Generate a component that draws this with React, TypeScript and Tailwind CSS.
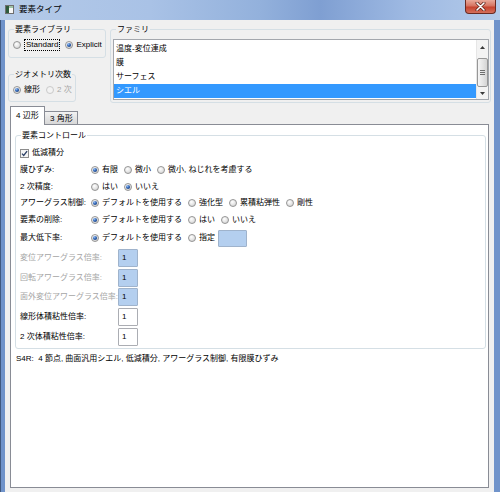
import React from "react";

type RP = { on?: boolean; dis?: boolean };

function Radio({ on, dis }: RP) {
  return (
    <svg width="8" height="8" viewBox="0 0 8 8" className="shrink-0 block">
      <defs>
        <radialGradient id="rgOff" cx="0.4" cy="0.35" r="0.7">
          <stop offset="0" stopColor="#ffffff" />
          <stop offset="1" stopColor="#d2d2d2" />
        </radialGradient>
        <radialGradient id="rgOn" cx="0.35" cy="0.3" r="0.75">
          <stop offset="0" stopColor="#9cc2f2" />
          <stop offset="0.5" stopColor="#3a6fbf" />
          <stop offset="1" stopColor="#1a3f7c" />
        </radialGradient>
      </defs>
      <circle
        cx="4"
        cy="4"
        r="3.5"
        fill={dis ? "#f3f3f3" : "url(#rgOff)"}
        stroke={dis ? "#c4c4c4" : "#8c8c8c"}
        strokeWidth="0.9"
      />
      {on && <circle cx="4" cy="4" r="2.1" fill={dis ? "#b5b5b5" : "url(#rgOn)"} />}
    </svg>
  );
}

function Opt({ on, dis, children }: RP & { children: React.ReactNode }) {
  return (
    <span className="flex items-center">
      <Radio on={on} dis={dis} />
      <span className={dis ? "ml-[3px] text-[#a6a6a6]" : "ml-[3px]"}>{children}</span>
    </span>
  );
}

function Group({
  label,
  className,
  bg,
  children,
}: {
  label: string;
  className: string;
  bg: string;
  children?: React.ReactNode;
}) {
  return (
    <div className={`border border-[#d5dfe5] rounded-[3px] flex flex-col ${className}`}>
      <span className={`-mt-[6px] ml-[5px] px-[1px] self-start leading-[11px] ${bg}`}>{label}</span>
      {children}
    </div>
  );
}

function Row({
  label,
  h,
  lw,
  dis,
  children,
}: {
  label: string;
  h: string;
  lw: string;
  dis?: boolean;
  children: React.ReactNode;
}) {
  return (
    <div className={`flex items-center pl-[4px] ${h}`}>
      <span className={`${lw} shrink-0 whitespace-nowrap ${dis ? "text-[#a6a6a6]" : ""}`}>{label}</span>
      <div className="flex items-center gap-[6px]">{children}</div>
    </div>
  );
}

function Field({ blue, value }: { blue?: boolean; value: string }) {
  return (
    <div
      className={`w-[20px] h-[18px] border rounded-[1px] flex items-center pl-[3px] ${
        blue ? "bg-[#b4cfef] border-[#9fb3cc]" : "bg-white border-[#abadb3]"
      }`}
    >
      {value}
    </div>
  );
}

function Checkbox() {
  return (
    <svg width="9" height="9" viewBox="0 0 9 9" className="shrink-0 block">
      <rect x="0.5" y="0.5" width="8" height="8" fill="#f4f4f4" stroke="#8c8c8c" />
      <path d="M2 4.6 L3.7 6.4 L7.1 2.1" stroke="#2b3f66" strokeWidth="1.3" fill="none" />
    </svg>
  );
}

export default function App() {
  const items = ["温度-変位連成", "膜", "サーフェス", "シエル"];
  return (
    <div className="w-[500px] h-[492px] flex flex-col overflow-hidden text-[8px] text-black font-['Liberation_Sans','Noto_Sans_CJK_JP',sans-serif] bg-[#7093ca]">
      {/* Title bar */}
      <div className="h-[20px] shrink-0 flex items-start bg-[linear-gradient(90deg,#b4cae8_0%,#a9c2e6_30%,#93b1dc_52%,#7f9fd2_64%,#9fbae3_82%,#b3cae9_100%)]">
        <svg width="9" height="9" viewBox="0 0 9 9" className="ml-[5px] mt-[5px] block shrink-0">
          <rect x="0.5" y="0.5" width="8" height="8" fill="#f7f7f7" stroke="#6f6f6f" />
          <rect x="1" y="1" width="3" height="7" fill="#2e5b3c" />
          <rect x="4" y="1" width="4" height="2" fill="#9fc5a8" />
        </svg>
        <span className="ml-[5px] mt-[4px] leading-[11px] text-[8.5px]">要素タイプ</span>
        <div className="ml-auto mr-[4px] w-[31px] h-[14px] rounded-b-[4px] border border-t-0 border-[#6a2a22] bg-[linear-gradient(180deg,#e9a99a_0%,#d67462_45%,#c6432f_55%,#d4705c_100%)] flex items-center justify-center">
          <svg width="11" height="9" viewBox="0 0 11 9" className="block">
            <path d="M2 1 L9 8 M9 1 L2 8" stroke="#5a1e16" strokeWidth="3" strokeLinecap="round" />
            <path d="M2 1 L9 8 M9 1 L2 8" stroke="#ffffff" strokeWidth="1.6" strokeLinecap="round" />
          </svg>
        </div>
      </div>

      {/* Frame + client */}
      <div className="flex-1 flex pl-[5px] pr-[6px] border-l border-[#41597f]">
        <div className="flex-1 bg-[#f0f0f0] flex flex-col pb-[4px] -ml-px">
          {/* Top section */}
          <div className="flex pl-[3px] pr-[3px] pt-[9px]">
            <div className="flex flex-col w-[98px] shrink-0">
              <Group label="要素ライブラリ" className="h-[29px]" bg="bg-[#f0f0f0]">
                <div className="mt-[4px] h-[12px] flex items-center pl-[4px]">
                  <Opt>
                    <span className="border border-dotted border-black px-[1px] leading-[10px] block">Standard</span>
                  </Opt>
                  <span className="ml-[5px]">
                    <Opt on>Explicit</Opt>
                  </span>
                </div>
              </Group>
              <Group label="ジオメトリ次数" className="mt-[16px] w-[68px] h-[28px]" bg="bg-[#f0f0f0]">
                <div className="mt-[4px] h-[12px] flex items-center pl-[4px] gap-[6px]">
                  <Opt on>線形</Opt>
                  <Opt dis>2 次</Opt>
                </div>
              </Group>
            </div>
            <Group label="ファミリ" className="ml-[4px] w-[381px] h-[74px]" bg="bg-[#f0f0f0]">
              <div className="mt-[4px] ml-[2px] w-[376px] h-[61px] border border-[#a3a7ad] bg-white flex">
                <div className="flex-1 flex flex-col pt-[2px]">
                  {items.map((t, i) => (
                    <div
                      key={t}
                      className={`h-[14px] leading-[14px] pl-[2px] ${
                        i === 3 ? "bg-[#3399ff] text-white" : ""
                      }`}
                    >
                      {t}
                    </div>
                  ))}
                </div>
                <div className="w-[12px] flex flex-col items-center bg-[#f3f3f3] border-l border-[#e6e6e6]">
                  <div className="h-[14px] flex items-center justify-center">
                    <svg width="5" height="3" viewBox="0 0 5 3" className="block">
                      <path d="M0 3 L2.5 0 L5 3 Z" fill="#3a3a3a" />
                    </svg>
                  </div>
                  <div className="mt-[4px] h-[29px] w-[11px] rounded-[2px] border border-[#979797] bg-[linear-gradient(90deg,#f6f6f6,#e2e2e2_60%,#d4d4d4)] flex flex-col items-center justify-center gap-[1px]">
                    <div className="w-[5px] h-px bg-[#6e6e6e]" />
                    <div className="w-[5px] h-px bg-[#6e6e6e]" />
                    <div className="w-[5px] h-px bg-[#6e6e6e]" />
                  </div>
                  <div className="flex-1 flex items-center justify-center">
                    <svg width="5" height="3" viewBox="0 0 5 3" className="block">
                      <path d="M0 0 L5 0 L2.5 3 Z" fill="#3a3a3a" />
                    </svg>
                  </div>
                </div>
              </div>
            </Group>
          </div>

          {/* Tabs */}
          <div className="mt-[3px] ml-[5px] h-[18px] flex items-end">
            <div className="relative z-10 -mb-px h-[19px] w-[35px] border border-b-0 border-[#898c95] bg-white flex items-start pt-[4px] pl-[5px] leading-[10px]">
              4 辺形
            </div>
            <div className="h-[13px] w-[33px] border border-b-0 border-l-0 border-[#898c95] bg-[linear-gradient(180deg,#f3f3f3,#e4e4e4_50%,#d8d8d8)] flex items-start pt-[2px] pl-[5px] leading-[10px]">
              3 角形
            </div>
          </div>

          {/* Panel */}
          <div className="flex-1 mx-[5px] border border-[#898c95] bg-white flex flex-col">
            <Group label="要素コントロール" className="mt-[10px] ml-[4px] mr-[2px] h-[214px]" bg="bg-white">
              <div className="mt-[4px] flex flex-col">
                <div className="h-[16px] flex items-center pl-[4px]">
                  <Checkbox />
                  <span className="ml-[3px]">低減積分</span>
                </div>
                <Row label="膜ひずみ:" h="h-[17px]" lw="w-[71px]">
                  <Opt on>有限</Opt>
                  <Opt>微小</Opt>
                  <Opt>微小, ねじれを考慮する</Opt>
                </Row>
                <Row label="2 次精度:" h="h-[17px]" lw="w-[71px]">
                  <Opt>はい</Opt>
                  <Opt on>いいえ</Opt>
                </Row>
                <Row label="アワーグラス制御:" h="h-[16px]" lw="w-[71px]">
                  <Opt on>デフォルトを使用する</Opt>
                  <Opt>強化型</Opt>
                  <Opt>累積粘弾性</Opt>
                  <Opt>剛性</Opt>
                </Row>
                <Row label="要素の削除:" h="h-[17px]" lw="w-[71px]">
                  <Opt on>デフォルトを使用する</Opt>
                  <Opt>はい</Opt>
                  <Opt>いいえ</Opt>
                </Row>
                <Row label="最大低下率:" h="h-[20px]" lw="w-[71px]">
                  <Opt on>デフォルトを使用する</Opt>
                  <span className="flex items-center">
                    <Opt>指定</Opt>
                    <div className="ml-[3px] w-[29px] h-[17px] border border-[#9fb3cc] bg-[#b4cfef] rounded-[1px]" />
                  </span>
                </Row>
                <Row label="変位アワーグラス倍率:" h="h-[20px]" lw="w-[98px]" dis>
                  <Field blue value="1" />
                </Row>
                <Row label="回転アワーグラス倍率:" h="h-[19px]" lw="w-[98px]" dis>
                  <Field blue value="1" />
                </Row>
                <Row label="面外変位アワーグラス倍率:" h="h-[20px]" lw="w-[98px]" dis>
                  <Field blue value="1" />
                </Row>
                <Row label="線形体積粘性倍率:" h="h-[20px]" lw="w-[98px]">
                  <Field value="1" />
                </Row>
                <Row label="2 次体積粘性倍率:" h="h-[20px]" lw="w-[98px]">
                  <Field value="1" />
                </Row>
              </div>
            </Group>
            <div className="mt-[5px] ml-[5px] leading-[10px] whitespace-nowrap">
              S4R:&nbsp;&nbsp;4 節点, 曲面汎用シエル, 低減積分, アワーグラス制御, 有限膜ひずみ
            </div>
          </div>
        </div>
      </div>
    </div>
  );
}
